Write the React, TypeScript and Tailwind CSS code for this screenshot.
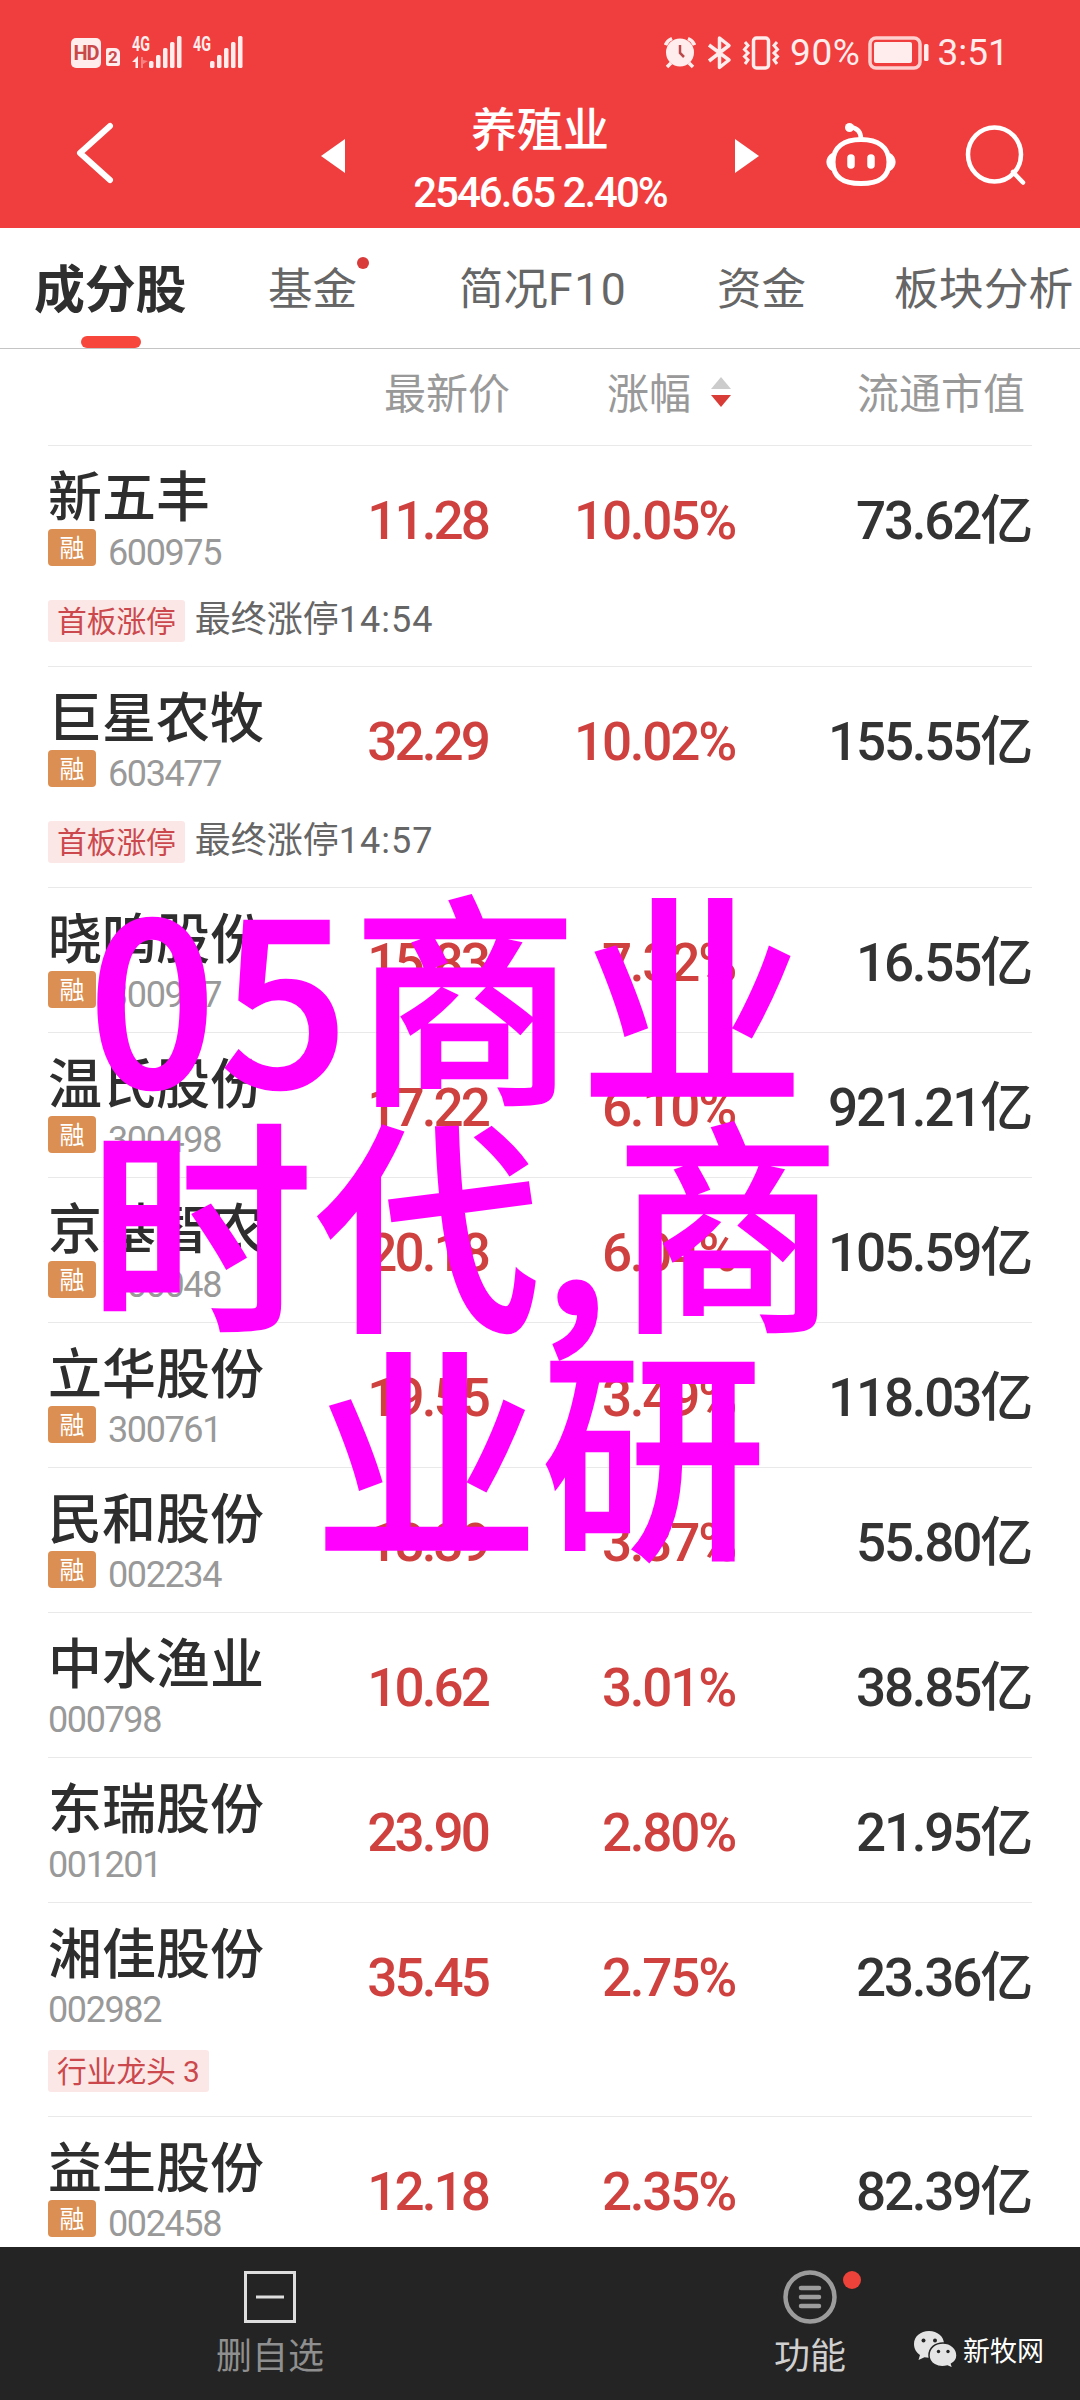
import clsx from 'clsx';

type Stock = {
  name: string;
  code: string;
  margin?: boolean;
  price: string;
  change: string;
  cap: string;
  tag?: string;
  noteTime?: string;
};

const stocks: Stock[] = [
  { name: '新五丰', code: '600975', margin: true, price: '11.28', change: '10.05%', cap: '73.62亿', tag: '首板涨停', noteTime: '14:54' },
  { name: '巨星农牧', code: '603477', margin: true, price: '32.29', change: '10.02%', cap: '155.55亿', tag: '首板涨停', noteTime: '14:57' },
  { name: '晓鸣股份', code: '300967', margin: true, price: '15.83', change: '7.32%', cap: '16.55亿' },
  { name: '温氏股份', code: '300498', margin: true, price: '17.22', change: '6.10%', cap: '921.21亿' },
  { name: '京基智农', code: '000048', margin: true, price: '20.18', change: '6.04%', cap: '105.59亿' },
  { name: '立华股份', code: '300761', margin: true, price: '19.55', change: '3.49%', cap: '118.03亿' },
  { name: '民和股份', code: '002234', margin: true, price: '18.39', change: '3.37%', cap: '55.80亿' },
  { name: '中水渔业', code: '000798', price: '10.62', change: '3.01%', cap: '38.85亿' },
  { name: '东瑞股份', code: '001201', price: '23.90', change: '2.80%', cap: '21.95亿' },
  { name: '湘佳股份', code: '002982', price: '35.45', change: '2.75%', cap: '23.36亿', tag: '行业龙头 3' },
  { name: '益生股份', code: '002458', margin: true, price: '12.18', change: '2.35%', cap: '82.39亿' },
];

function Signal({ arrows }: { arrows?: boolean }) {
  return (
    <svg className="overflow-visible" width="51" height="34" viewBox="0 0 51 34" fill="#ffecec">
      <text x="0" y="15" fontSize="20" fontWeight="700" textLength="18" lengthAdjust="spacingAndGlyphs">4G</text>
      {arrows && <path d="M0 26L6 20V32H3.500V26Z" />}
      {arrows && <path d="M9 21V32H11V28L16 25L11 24V21Z" opacity="0.4" />}
      <rect x="17" y="25" width="4.500" height="7" rx="1.500" />
      <rect x="24" y="19" width="4.500" height="13" rx="1.500" />
      <rect x="31" y="12" width="4.500" height="20" rx="1.500" />
      <rect x="38" y="6" width="4.500" height="26" rx="1.500" />
      <rect x="45" y="0" width="4.500" height="32" rx="1.500" />
    </svg>
  );
}

function StatusBar() {
  return (
    <div className="flex h-[104px] items-start pt-9 pl-[71px] text-[#ffecec]">
      <div className="mt-0.5 flex h-[30px] w-[30px] items-center justify-center rounded-[5px] bg-[#ffecec] text-[20px] leading-none font-bold tracking-[-1px] text-[#c9494b]">HD</div>
      <div className="mt-3 ml-[5px] flex h-[18px] w-[14px] items-center justify-center rounded-[2px] rounded-tr-[5px] bg-[#ffecec] text-[17px] leading-none font-bold text-[#c9494b]">2</div>
      <div className="ml-3"><Signal arrows /></div>
      <div className="ml-[10px]"><Signal /></div>

      {/* alarm */}
      <svg className="ml-[420px]" width="32" height="34" viewBox="0 0 32 34">
        <path d="M1.500 9A12 12 0 0 1 8 2.500M24 2.500A12 12 0 0 1 30.500 9" stroke="#ffecec" strokeWidth="3.500" fill="none" />
        <path d="M7 27L3 31M25 27L29 31" stroke="#ffecec" strokeWidth="3.500" />
        <circle cx="16" cy="16.500" r="14" fill="#ffecec" />
        <path d="M16 9V17L20 21" stroke="#b9494b" strokeWidth="2.500" fill="none" />
      </svg>
      {/* bluetooth */}
      <svg className="ml-[11px]" width="26" height="34" viewBox="0 0 26 34" fill="none" stroke="#ffecec" strokeWidth="3.500">
        <path d="M2 9L22 24L12.500 31.500V2L22 9.500L2 25" strokeLinejoin="round" />
      </svg>
      {/* vibrate */}
      <svg className="ml-2" width="40" height="34" viewBox="0 0 40 34" fill="none" stroke="#ffecec">
        <rect x="12.500" y="2" width="15" height="30" rx="3" strokeWidth="3.500" />
        <path d="M4 6L7 9.500L3.500 13.500L7 17L3.500 20.500L7 24L4 28" strokeWidth="3" />
        <path d="M36 6L33 9.500L36.500 13.500L33 17L36.500 20.500L33 24L36 28" strokeWidth="3" />
      </svg>
      <span className="ml-[9px] text-[37px] leading-[34px] tracking-[0.6px]">90%</span>
      <svg className="ml-[7px]" width="62" height="34" viewBox="0 0 62 34" fill="#ffecec">
        <rect x="2" y="2" width="50" height="30" rx="6" fill="none" stroke="#ffd0d0" strokeWidth="3.500" />
        <rect x="6" y="6" width="38" height="21" rx="2" />
        <rect x="56" y="8" width="4.500" height="17" rx="1.500" />
      </svg>
      <span className="ml-2 text-[37px] leading-[34px]">3:51</span>
    </div>
  );
}

function TitleBar() {
  return (
    <div className="flex h-[124px] items-start text-white">
      <svg className="mt-[18px] ml-[75px]" width="40" height="62" viewBox="0 0 40 62" fill="none" stroke="#fff" strokeWidth="6" strokeLinecap="round" strokeLinejoin="round">
        <path d="M35 4L5 31L35 58" />
      </svg>
      <svg className="mt-[35px] ml-[206px]" width="24" height="34" viewBox="0 0 24 34" fill="#fff">
        <path d="M24 0V34L0 17Z" />
      </svg>
      <div className="w-[390px] text-center">
        <h1 className="text-[46px] leading-[52px] font-medium">养殖业</h1>
        <p className="mt-[11px] text-[42px] leading-[52px] font-medium tracking-[-2px]">2546.65 2.40%</p>
      </div>
      <svg className="mt-[35px]" width="24" height="34" viewBox="0 0 24 34" fill="#fff">
        <path d="M0 0V34L24 17Z" />
      </svg>
      {/* robot assistant */}
      <svg className="mt-[18px] ml-[67px]" width="70" height="66" viewBox="0 0 70 66" fill="none" stroke="#fff" strokeWidth="5">
        <path d="M35 17C35 10 32 6 24 5" strokeWidth="4.500" />
        <circle cx="23.500" cy="5.500" r="4.500" fill="#fff" stroke="none" />
        <path d="M35 17.500C52 17.500 63 25 63 40C63 56 52 61.500 35 61.500C18 61.500 7 56 7 40C7 25 18 17.500 35 17.500Z" />
        <path d="M6 31C-1.500 35 -1.500 45 6 49ZM64 31C71.500 35 71.500 45 64 49Z" fill="#fff" stroke="none" />
        <path d="M25 36V43M45 36V43" strokeWidth="7.500" strokeLinecap="round" />
      </svg>
      <svg className="mt-[21px] ml-[69px]" width="62" height="62" viewBox="0 0 62 62" fill="none" stroke="#fff" strokeWidth="4.500" strokeLinecap="round">
        <ellipse cx="29.500" cy="29.500" rx="26.500" ry="27" />
        <path d="M48 47L58 57.500" />
      </svg>
    </div>
  );
}

function Tabs() {
  return (
    <nav className="flex h-[121px] items-start overflow-hidden border-b border-[#c4c4c4] pt-9 text-[44.500px] leading-[52px] whitespace-nowrap text-[#666]">
      <div className="ml-[34px] w-[153px] text-[51px] font-bold tracking-[-0.3px] text-[#2f2f2f]">
        <div className="h-[72px] pt-px">成分股</div>
        <div className="ml-[47px] h-3 w-[60px] rounded-full bg-[#f7473c]" />
      </div>
      <div className="relative ml-[81px]">
        基金
        <span className="absolute -top-[7px] left-[89px] h-3 w-3 rounded-full bg-[#d93a3a]" />
      </div>
      <div className="ml-[102px] w-[166px]">
        简况<span className="tracking-[1.5px]">F10</span>
      </div>
      <div className="ml-[92px]">资金</div>
      <div className="ml-[88px] text-[44.800px]">板块分析</div>
    </nav>
  );
}

function TableHead() {
  return (
    <div className="flex h-[97px] pt-5 text-[42px] leading-[52px] text-[#999]">
      <span className="ml-[384px]">最新价</span>
      <span className="ml-[97px]">涨幅</span>
      <svg className="mt-2 ml-5" width="20" height="31" viewBox="0 0 20 31">
        <path d="M10 0L20 12H0Z" fill="#ccc" />
        <path d="M0 18H20L10 30Z" fill="#d93c36" />
      </svg>
      <span className="ml-[126px]">流通市值</span>
    </div>
  );
}

function StockRow({ stock }: { stock: Stock }) {
  return (
    <div
      className={clsx(
        'grid shrink-0 grid-cols-[241px_199px_247px_296px] content-start border-t border-[#e9e9e9]',
        stock.noteTime ? 'h-[221px]' : stock.tag ? 'h-[214px]' : 'h-[145px]',
      )}
    >
      <div className="pt-[26px]">
        <div className="text-[54px] leading-[54px] font-medium whitespace-nowrap text-[#2e2e2e]">{stock.name}</div>
        <div className="mt-[3px] flex h-[37px] items-start">
          {stock.margin && (
            <span className="mr-3 h-[37px] w-12 rounded-[4px] bg-[#db8f52] text-center text-[25px] leading-[39px] text-white">融</span>
          )}
          <span className="mt-3 text-[36px] leading-6 tracking-[-1.4px] text-[#999]">{stock.code}</span>
        </div>
      </div>
      <div className="pt-[48px] text-right text-[53px] leading-[54px] font-medium tracking-[-2.900px] text-[#cf413f]">{stock.price}</div>
      <div className="pt-[48px] text-right text-[53px] leading-[54px] font-medium tracking-[-2.200px] text-[#cf413f]">{stock.change}</div>
      <div className="pt-[48px] text-right text-[53px] leading-[54px] font-medium tracking-[-2.200px] text-[#333]">{stock.cap}</div>
      {stock.tag && (
        <div className={clsx('col-span-4 flex items-center', stock.noteTime ? 'mt-[34px]' : 'mt-[27px]')}>
          <span className="h-[42px] rounded-[3px] bg-[#fce7e7] px-[9px] text-[29.800px] leading-[43px] tracking-[-0.1px] text-[#cb484c]">{stock.tag}</span>
          {stock.noteTime && (
            <span className="-mt-0.5 ml-[10px] text-[36px] leading-[42px] text-[#666]">
              最终涨停<span className="tracking-[1px]">{stock.noteTime}</span>
            </span>
          )}
        </div>
      )}
    </div>
  );
}

function BottomBar() {
  return (
    <footer className="flex h-[153px] shrink-0 bg-[#242424] text-[36px] leading-[42px]">
      <div className="flex w-[540px] flex-col items-center pt-6">
        <svg width="52" height="52" viewBox="0 0 52 52" fill="none" stroke="#dedede" strokeWidth="3">
          <rect x="1.500" y="1.500" width="49" height="49" />
          <path d="M12 26H40" />
        </svg>
        <span className="mt-[13px] text-[#8f8f8f]">删自选</span>
      </div>
      <div className="relative flex w-[540px] flex-col items-center pt-[23px]">
        <svg width="54" height="54" viewBox="0 0 54 54" fill="none" stroke="#9c9c9c" strokeWidth="4.500" strokeLinecap="round">
          <circle cx="27" cy="27" r="24.500" />
          <path d="M18 18H36M18 27H36M18 36H36" />
        </svg>
        <span className="mt-3 text-[#d0d0d0]">功能</span>
        <span className="absolute top-6 left-[303px] h-[18px] w-[18px] rounded-full bg-[#ec423a]" />
        {/* account watermark */}
        <div className="absolute top-[82px] left-[374px] flex items-start gap-[6px]">
          <svg className="mt-0.5" width="43" height="38" viewBox="0 0 43 38">
            <path d="M15 0C6.500 0 0 5.500 0 13C0 18 2.500 21.500 6 24L4.500 29L10.500 26.200C21 28.500 30 22 30 13C30 5.500 23.500 0 15 0Z" fill="#e4e4e4" />
            <path d="M29 12C21 12 15 17 15 24.500C15 32.500 23.500 37.500 33.500 35L39 37.500L37.500 33C41 31 43 28 43 24.500C43 17.500 37 12 29 12Z" fill="#e4e4e4" stroke="#242424" strokeWidth="1.500" />
            <g fill="#242424">
              <circle cx="9.500" cy="9.500" r="2" />
              <circle cx="21" cy="9.500" r="2" />
              <circle cx="24.500" cy="20.500" r="1.700" />
              <circle cx="34" cy="20.500" r="1.700" />
            </g>
          </svg>
          <span className="text-[27px] leading-[46px] text-white">新牧网</span>
        </div>
      </div>
    </footer>
  );
}

export default function App() {
  return (
    <div className="relative flex h-[2400px] w-[1080px] flex-col overflow-hidden bg-white font-[Roboto,'Noto_Sans_CJK_SC',sans-serif]">
      <header className="bg-[#f03d3d]">
        <StatusBar />
        <TitleBar />
      </header>
      <Tabs />
      <TableHead />
      <main className="-mt-px flex min-h-0 flex-1 flex-col overflow-hidden px-12">
        {stocks.map((stock) => (
          <StockRow key={stock.code} stock={stock} />
        ))}
      </main>
      <BottomBar />

      {/* headline laid over the list */}
      <div className="pointer-events-none absolute top-[876px] left-[88px] text-[225px] leading-[227px] font-medium tracking-[2px] whitespace-nowrap text-[#ff00ff] [-webkit-text-stroke:2.500px_#ff00ff] font-['Noto_Sans_CJK_SC',sans-serif]">
        <div><span className="tracking-[4px]">05</span>商业</div>
        <div>时代<span className="tracking-[6px]">,</span>商</div>
        <div className="pl-[226px]">业研</div>
      </div>
    </div>
  );
}
